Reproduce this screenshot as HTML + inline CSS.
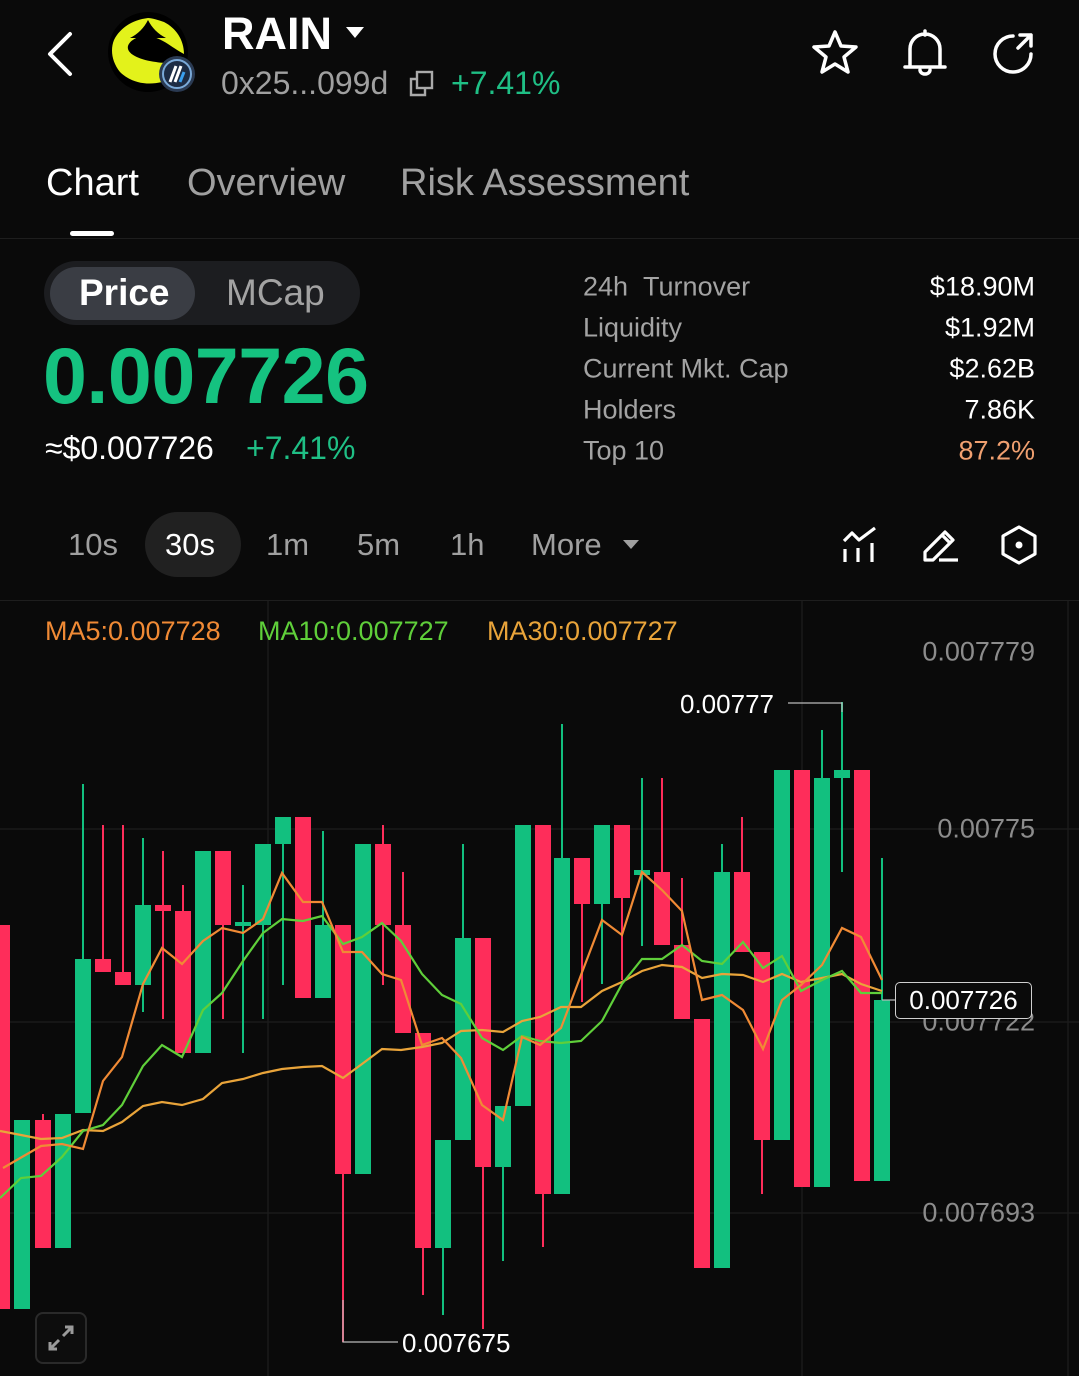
<!DOCTYPE html>
<html><head><meta charset="utf-8">
<style>
*{margin:0;padding:0;box-sizing:border-box}
body{width:1079px;height:1376px;background:#0a0a0a;overflow:hidden;position:relative;font-family:"Liberation Sans",sans-serif;color:#fff}
.a{position:absolute;white-space:nowrap}
.g{color:#9a9a9a}
.lbl{position:absolute;left:583px;font-size:27px;color:#a3a3a3;transform:translateY(-50%)}
.val{position:absolute;right:44px;font-size:27px;color:#fff;transform:translateY(-50%)}
.tf{position:absolute;top:545px;transform:translateY(-50%);font-size:31px;color:#a0a0a0}
.yl{position:absolute;right:44px;font-size:27px;color:#8c8c8c;transform:translateY(-50%)}
</style></head><body>

<!-- header -->
<svg class="a" style="left:40px;top:28px" width="40" height="52" viewBox="0 0 40 52"><path d="M30 6 L10 26 L30 46" stroke="#fff" stroke-width="4" fill="none" stroke-linecap="round" stroke-linejoin="round"/></svg>
<svg class="a" style="left:104px;top:10px" width="96" height="90" viewBox="0 0 96 90">
<circle cx="44" cy="42" r="40" fill="#000"/>
<path d="M44 8 C28 10 16 18 10 30 C6 40 8 52 16 62 C26 72 42 76 58 72 C70 68 78 58 80 48 C72 52 62 54 52 52 C36 50 22 44 24 36 C26 30 34 26 42 26 C50 26 58 30 64 34 C70 38 76 42 80 44 C80 30 72 18 60 12 C54 10 48 8 44 8 Z" fill="#e3f21b"/>
<path d="M44 10 C40 18 34 24 26 28 L62 28 C54 24 48 18 44 10Z" fill="#000"/>
<circle cx="73" cy="64" r="18" fill="#2a3a52"/>
<circle cx="73" cy="64" r="14" fill="#1d2c44" stroke="#7aa9d8" stroke-width="2"/>
<path d="M66 72 L72 56 M71 72 L77 56" stroke="#fff" stroke-width="3"/>
<path d="M76 72 L80 62" stroke="#3aa0f0" stroke-width="3"/>
</svg>
<div class="a" style="left:222px;top:8px;font-size:45px;font-weight:bold">RAIN</div>
<svg class="a" style="left:346px;top:27px" width="18" height="12"><path d="M0 0 L18 0 L9 11Z" fill="#fff"/></svg>
<div class="a g" style="left:221px;top:65px;font-size:32px;color:#a0a0a0">0x25...099d</div>
<svg class="a" style="left:409px;top:70px" width="26" height="28" viewBox="0 0 26 28"><rect x="8" y="2" width="15" height="16" fill="none" stroke="#aaa" stroke-width="2.4"/><path d="M8 9 H2 V25 H16 V18" fill="none" stroke="#aaa" stroke-width="2.4"/></svg>
<div class="a" style="left:451px;top:65px;font-size:32px;color:#1fbf85">+7.41%</div>

<svg class="a" style="left:810px;top:28px" width="50" height="50" viewBox="0 0 50 50"><path d="M25 4 L31 18 L46 19 L34 29 L38 44 L25 36 L12 44 L16 29 L4 19 L19 18 Z" fill="none" stroke="#fff" stroke-width="3.5" stroke-linejoin="round"/></svg>
<svg class="a" style="left:900px;top:28px" width="50" height="50" viewBox="0 0 50 50"><path d="M25 3 V7 M10 38 V21 A15 15 0 0 1 40 21 V38 M5 39 H45 M20 42 A5 4 0 0 0 30 42" fill="none" stroke="#fff" stroke-width="3.5" stroke-linecap="round"/></svg>
<svg class="a" style="left:988px;top:28px" width="50" height="50" viewBox="0 0 50 50"><path d="M43 26 A18 18 0 1 1 25 8" fill="none" stroke="#fff" stroke-width="3.5" stroke-linecap="round"/><path d="M30 20 L43 7 M32 7 H43 V18" fill="none" stroke="#fff" stroke-width="3.5" stroke-linecap="round" stroke-linejoin="round"/></svg>

<!-- tabs -->
<div class="a" style="left:46px;top:162px;font-size:38px;color:#fff">Chart</div>
<div class="a" style="left:187px;top:162px;font-size:38px;color:#a0a0a0">Overview</div>
<div class="a" style="left:400px;top:162px;font-size:38px;color:#a0a0a0">Risk Assessment</div>
<div class="a" style="left:70px;top:231px;width:44px;height:5px;border-radius:3px;background:#fff"></div>
<div class="a" style="left:0;top:238px;width:1079px;height:1px;background:#1e1e1e"></div>

<!-- price toggle -->
<div class="a" style="left:44px;top:261px;width:316px;height:64px;border-radius:32px;background:#1c1d20"></div>
<div class="a" style="left:50px;top:267px;width:145px;height:53px;border-radius:27px;background:#3a3d44"></div>
<div class="a" style="left:79px;top:272px;font-size:37px;font-weight:bold;color:#fff">Price</div>
<div class="a" style="left:226px;top:272px;font-size:37px;color:#a3a3a3">MCap</div>
<div class="a" style="left:43px;top:330px;font-size:79px;font-weight:bold;color:#15c280;letter-spacing:-0.5px">0.007726</div>
<div class="a" style="left:45px;top:430px;font-size:32px;color:#fff">≈$0.007726</div>
<div class="a" style="left:246px;top:430px;font-size:32px;color:#1fbf85">+7.41%</div>

<!-- stats -->
<div class="lbl" style="top:287px">24h&nbsp;&nbsp;Turnover</div><div class="val" style="top:287px">$18.90M</div>
<div class="lbl" style="top:328px">Liquidity</div><div class="val" style="top:328px">$1.92M</div>
<div class="lbl" style="top:369px">Current Mkt. Cap</div><div class="val" style="top:369px">$2.62B</div>
<div class="lbl" style="top:410px">Holders</div><div class="val" style="top:410px">7.86K</div>
<div class="lbl" style="top:451px">Top 10</div><div class="val" style="top:451px;color:#f0a070">87.2%</div>

<!-- timeframes -->
<div class="a" style="left:145px;top:512px;width:96px;height:65px;border-radius:33px;background:#212121"></div>
<div class="tf" style="left:68px">10s</div>
<div class="tf" style="left:165px;color:#fff">30s</div>
<div class="tf" style="left:266px">1m</div>
<div class="tf" style="left:357px">5m</div>
<div class="tf" style="left:450px">1h</div>
<div class="tf" style="left:531px">More</div>
<svg class="a" style="left:623px;top:540px" width="16" height="10"><path d="M0 0 H16 L8 9Z" fill="#a0a0a0"/></svg>
<svg class="a" style="left:840px;top:525px" width="40" height="40" viewBox="0 0 40 40"><path d="M4 16 L12 8 L19 15 L35 3" fill="none" stroke="#fff" stroke-width="3.2" stroke-linejoin="round"/><path d="M5 24 V37 M18 23 V37 M32 18 V37" stroke="#fff" stroke-width="3.2"/></svg>
<svg class="a" style="left:918px;top:525px" width="44" height="40" viewBox="0 0 44 40"><path d="M7 35 V27 L27 7 L35 15 L15 35 Z M24 10 L32 18" fill="none" stroke="#fff" stroke-width="3.2" stroke-linejoin="round"/><path d="M21 35 H40" stroke="#fff" stroke-width="3.2"/></svg>
<svg class="a" style="left:999px;top:524px" width="40" height="42" viewBox="0 0 40 42"><path d="M20 3 L36 12 V30 L20 39 L4 30 V12 Z" fill="none" stroke="#fff" stroke-width="3.2" stroke-linejoin="round"/><circle cx="20" cy="21" r="3.5" fill="#fff"/></svg>
<div class="a" style="left:0;top:600px;width:1079px;height:1px;background:#1e1e1e"></div>

<!-- chart -->
<svg class="a" style="left:0;top:601px" width="1079" height="775" viewBox="0 601 1079 775">
<rect x="0" y="601" width="1079" height="775" fill="#0a0a0a"/>
<g stroke="#1b1b1b" stroke-width="1.5">
<line x1="0" y1="829" x2="1079" y2="829"/><line x1="0" y1="1022" x2="1079" y2="1022"/><line x1="0" y1="1213" x2="1079" y2="1213"/>
<line x1="268" y1="601" x2="268" y2="1376"/><line x1="802" y1="601" x2="802" y2="1376"/><line x1="1068" y1="601" x2="1068" y2="1376"/>
</g>
<g id="c">
<g stroke-width="2">
<line x1="43" y1="1114" x2="43" y2="1120" stroke="#fe2d5a"/>
<line x1="83" y1="784" x2="83" y2="959" stroke="#12c07f"/>
<line x1="103" y1="825" x2="103" y2="959" stroke="#fe2d5a"/>
<line x1="123" y1="825" x2="123" y2="972" stroke="#fe2d5a"/>
<line x1="143" y1="838" x2="143" y2="1012" stroke="#12c07f"/>
<line x1="163" y1="851" x2="163" y2="1019" stroke="#fe2d5a"/>
<line x1="183" y1="885" x2="183" y2="911" stroke="#fe2d5a"/>
<line x1="223" y1="925" x2="223" y2="1019" stroke="#fe2d5a"/>
<line x1="243" y1="885" x2="243" y2="1053" stroke="#12c07f"/>
<line x1="263" y1="925" x2="263" y2="1019" stroke="#12c07f"/>
<line x1="283" y1="844" x2="283" y2="985" stroke="#12c07f"/>
<line x1="323" y1="831" x2="323" y2="925" stroke="#12c07f"/>
<line x1="343" y1="1174" x2="343" y2="1342" stroke="#fe2d5a"/>
<line x1="383" y1="825" x2="383" y2="985" stroke="#fe2d5a"/>
<line x1="403" y1="872" x2="403" y2="925" stroke="#fe2d5a"/>
<line x1="423" y1="1248" x2="423" y2="1295" stroke="#fe2d5a"/>
<line x1="443" y1="1248" x2="443" y2="1315" stroke="#12c07f"/>
<line x1="463" y1="844" x2="463" y2="938" stroke="#12c07f"/>
<line x1="483" y1="1167" x2="483" y2="1329" stroke="#fe2d5a"/>
<line x1="503" y1="1167" x2="503" y2="1261" stroke="#12c07f"/>
<line x1="543" y1="1194" x2="543" y2="1247" stroke="#fe2d5a"/>
<line x1="562" y1="724" x2="562" y2="858" stroke="#12c07f"/>
<line x1="582" y1="904" x2="582" y2="1002" stroke="#fe2d5a"/>
<line x1="602" y1="904" x2="602" y2="984" stroke="#12c07f"/>
<line x1="622" y1="898" x2="622" y2="980" stroke="#fe2d5a"/>
<line x1="642" y1="778" x2="642" y2="946" stroke="#12c07f"/>
<line x1="662" y1="778" x2="662" y2="872" stroke="#fe2d5a"/>
<line x1="682" y1="878" x2="682" y2="945" stroke="#fe2d5a"/>
<line x1="722" y1="844" x2="722" y2="872" stroke="#12c07f"/>
<line x1="742" y1="817" x2="742" y2="872" stroke="#fe2d5a"/>
<line x1="762" y1="1140" x2="762" y2="1194" stroke="#fe2d5a"/>
<line x1="822" y1="730" x2="822" y2="778" stroke="#12c07f"/>
<line x1="842" y1="702" x2="842" y2="872" stroke="#12c07f"/>
<line x1="882" y1="858" x2="882" y2="1000" stroke="#12c07f"/>
</g>
<g fill="#fe2d5a">
<rect x="-6" y="925" width="16" height="384"/>
<rect x="35" y="1120" width="16" height="128"/>
<rect x="95" y="959" width="16" height="13"/>
<rect x="115" y="972" width="16" height="13"/>
<rect x="155" y="905" width="16" height="6"/>
<rect x="175" y="911" width="16" height="142"/>
<rect x="215" y="851" width="16" height="74"/>
<rect x="295" y="817" width="16" height="181"/>
<rect x="335" y="925" width="16" height="249"/>
<rect x="375" y="844" width="16" height="81"/>
<rect x="395" y="925" width="16" height="108"/>
<rect x="415" y="1033" width="16" height="215"/>
<rect x="475" y="938" width="16" height="229"/>
<rect x="535" y="825" width="16" height="369"/>
<rect x="574" y="858" width="16" height="46"/>
<rect x="614" y="825" width="16" height="73"/>
<rect x="654" y="872" width="16" height="73"/>
<rect x="674" y="945" width="16" height="74"/>
<rect x="694" y="1019" width="16" height="249"/>
<rect x="734" y="872" width="16" height="80"/>
<rect x="754" y="952" width="16" height="188"/>
<rect x="794" y="770" width="16" height="417"/>
<rect x="854" y="770" width="16" height="411"/>
</g>
<g fill="#12c07f">
<rect x="14" y="1120" width="16" height="189"/>
<rect x="55" y="1114" width="16" height="134"/>
<rect x="75" y="959" width="16" height="154"/>
<rect x="135" y="905" width="16" height="80"/>
<rect x="195" y="851" width="16" height="202"/>
<rect x="235" y="922" width="16" height="4"/>
<rect x="255" y="844" width="16" height="81"/>
<rect x="275" y="817" width="16" height="27"/>
<rect x="315" y="925" width="16" height="73"/>
<rect x="355" y="844" width="16" height="330"/>
<rect x="435" y="1140" width="16" height="108"/>
<rect x="455" y="938" width="16" height="202"/>
<rect x="495" y="1106" width="16" height="61"/>
<rect x="515" y="825" width="16" height="281"/>
<rect x="554" y="858" width="16" height="336"/>
<rect x="594" y="825" width="16" height="79"/>
<rect x="634" y="870" width="16" height="5"/>
<rect x="714" y="872" width="16" height="396"/>
<rect x="774" y="770" width="16" height="370"/>
<rect x="814" y="778" width="16" height="409"/>
<rect x="834" y="770" width="16" height="8"/>
<rect x="874" y="1000" width="16" height="181"/>
</g>
</g>
<polyline fill="none" stroke="#e9a43a" stroke-width="2.2" points="0,1131 21,1135 41,1139 62,1138 83,1130 103,1131 122,1122 143,1106 162,1102 182,1105 203,1099 222,1083 243,1079 263,1073 282,1069 303,1067 322,1066 343,1078 362,1064 382,1049 401,1050 422,1047 442,1043 461,1031 482,1030 503,1032 522,1021 540,1017 561,1007 581,1007 602,991 622,982 642,971 662,965 682,967 702,978 722,974 743,975 763,982 782,974 801,982 822,978 842,974 861,984 882,991"/>
<polyline fill="none" stroke="#5fcf3a" stroke-width="2.2" points="0,1198 21,1178 41,1176 62,1157 83,1131 103,1125 122,1105 143,1066 162,1045 182,1057 203,1010 222,993 243,961 263,933 282,919 303,921 322,916 343,944 362,937 382,923 401,941 422,974 442,995 461,1004 482,1038 503,1050 522,1036 540,1041 561,1043 581,1041 602,1021 622,984 642,959 662,959 682,945 702,961 722,964 743,942 763,968 782,956 801,991 822,980 842,971 861,993 882,993"/>
<polyline fill="none" stroke="#f08a35" stroke-width="2.2" points="3,1168 41,1146 62,1144 83,1149 103,1081 122,1057 143,984 162,948 182,964 203,941 222,928 243,933 263,919 282,873 303,902 322,902 343,952 362,952 382,974 401,980 422,1045 442,1038 461,1058 482,1105 503,1120 522,1037 540,1045 561,1028 581,975 602,920 622,935 642,872 662,890 682,911 702,1000 722,995 743,1010 763,1049 782,1000 801,985 822,965 842,928 861,937 882,980"/>
<path d="M788 703 H842 V712" stroke="#bbb" stroke-width="1.2" fill="none"/>
<path d="M343 1300 V1342 H398" stroke="#bbb" stroke-width="1.2" fill="none"/>
<line x1="882" y1="1000" x2="896" y2="1000" stroke="#bbb" stroke-width="1.2"/>
</svg>

<div class="a" style="left:680px;top:689px;font-size:26px;color:#fff">0.00777</div>
<div class="a" style="left:402px;top:1328px;font-size:26px;color:#fff">0.007675</div>

<div class="a" style="left:45px;top:616px;font-size:27px;color:#f08a35">MA5:0.007728</div>
<div class="a" style="left:258px;top:616px;font-size:27px;color:#5fcf3a">MA10:0.007727</div>
<div class="a" style="left:487px;top:616px;font-size:27px;color:#e9a43a">MA30:0.007727</div>

<div class="yl" style="top:652px">0.007779</div>
<div class="yl" style="top:829px">0.00775</div>
<div class="yl" style="top:1022px">0.007722</div>
<div class="yl" style="top:1213px">0.007693</div>

<div class="a" style="left:895px;top:982px;width:137px;height:37px;border:1.5px solid #cfcfcf;border-radius:5px;background:#0a0a0a;font-size:26px;color:#fff;text-align:center;line-height:34px">0.007726</div>

<div class="a" style="left:35px;top:1312px;width:52px;height:52px;border:2px solid #2a2a2a;border-radius:8px;background:#0d0d0d"></div>
<svg class="a" style="left:45px;top:1322px" width="32" height="32" viewBox="0 0 32 32"><path d="M18 14 L26 6 M20 5 H27 V12 M14 18 L6 26 M5 20 V27 H12" stroke="#9a9a9a" stroke-width="3" fill="none"/></svg>
</body></html>
